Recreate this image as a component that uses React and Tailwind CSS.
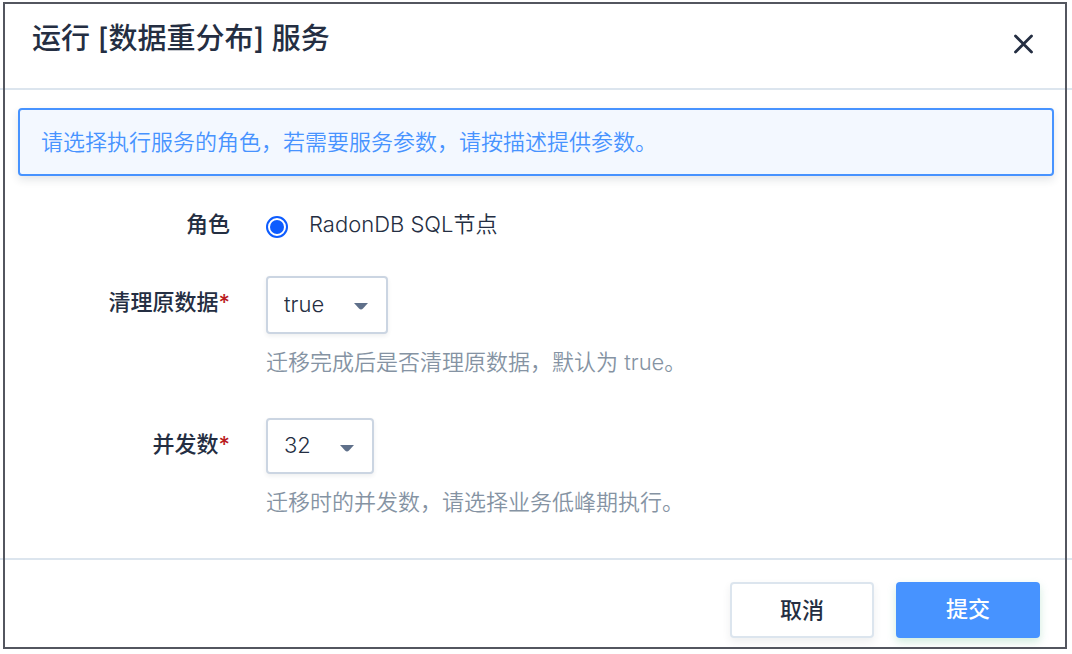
import { useState } from "react";

function RequiredMark() {
  return <span className="text-[#ba1c21]">*</span>;
}

function Select({ id, options, defaultValue, className }) {
  return (
    <div className={`relative ${className}`}>
      <select
        id={id}
        defaultValue={defaultValue}
        className="block h-full w-full appearance-none rounded-[4px] border-2 border-[#cbd5e2] bg-white pb-0.5 pl-4 text-[22px] leading-8 text-[#242e42] shadow-[0_2px_4px_rgba(36,46,66,0.08)] outline-none"
      >
        {options.map((option) => (
          <option key={option}>{option}</option>
        ))}
      </select>
      <svg
        viewBox="0 0 14 7"
        aria-hidden="true"
        className="pointer-events-none absolute top-[27px] right-5 h-[7px] w-[14px] fill-[#5f708a]"
      >
        <path d="M0 0h14L9 5.6Q7 7.4 5 5.6Z" />
      </svg>
    </div>
  );
}

function Field({ id, label, hint, children }) {
  return (
    <div className="grid grid-cols-[212px_1fr] gap-x-9">
      <label htmlFor={id} className="pt-2.5 text-right font-medium">
        {label}
        <RequiredMark />
      </label>
      <div>
        {children}
        <p className="mt-3 text-[#8593a3]">{hint}</p>
      </div>
    </div>
  );
}

export default function App() {
  const [role, setRole] = useState("sql");

  return (
    <main
      role="dialog"
      aria-labelledby="dialog-title"
      className="relative bg-white pb-[5px] font-['Inter','Noto_Sans_CJK_SC',sans-serif] text-[22px] leading-8 font-[350] text-[#242e42]"
    >
      <header className="flex h-[90px] items-start justify-between border-b-2 border-[#dce5ee] pr-[35px] pl-8">
        <h1 id="dialog-title" className="pt-[19px] text-[29px] leading-10 font-medium">
          运行 [数据重分布] 服务
        </h1>
        <button type="button" aria-label="关闭" className="mt-8 p-0.5">
          <svg
            viewBox="0 0 22 22"
            className="size-[22px] stroke-[#242e42]"
            fill="none"
            strokeWidth="2.8"
            strokeLinecap="round"
          >
            <path d="M2.5 2l16 16M18.5 2l-16 16" />
          </svg>
        </button>
      </header>

      <form onSubmit={(event) => event.preventDefault()}>
        <div className="px-[18px] pt-[18px] pb-10">
          <p className="rounded-[4px] border-2 border-[#4793ff] bg-[#f3f8ff] px-[21px] py-4 text-[#4793ff] shadow-[0_4px_8px_rgba(36,46,66,0.12)]">
            请选择执行服务的角色，若需要服务参数，请按描述提供参数。
          </p>

          <div className="mt-8 grid grid-cols-[212px_1fr] gap-x-9">
            <span id="role-label" className="text-right font-medium">
              角色
            </span>
            <div role="radiogroup" aria-labelledby="role-label">
              <label className="flex items-start gap-[21px]">
                <input
                  type="radio"
                  name="role"
                  value="sql"
                  checked={role === "sql"}
                  onChange={(event) => setRole(event.target.value)}
                  className="mt-2 grid size-[22px] appearance-none place-content-center rounded-full border-2 border-[#0d5cff] bg-white before:size-[14px] before:rounded-full checked:before:bg-[#0d5cff]"
                />
                RadonDB SQL节点
              </label>
            </div>
          </div>

          <div className="mt-9 flex flex-col gap-10">
            <Field
              id="cleanup"
              label="清理原数据"
              hint="迁移完成后是否清理原数据，默认为 true。"
            >
              <Select
                id="cleanup"
                options={["true", "false"]}
                defaultValue="true"
                className="h-[58px] w-[122px]"
              />
            </Field>
            <Field
              id="concurrency"
              label="并发数"
              hint="迁移时的并发数，请选择业务低峰期执行。"
            >
              <Select
                id="concurrency"
                options={["8", "16", "32", "64"]}
                defaultValue="32"
                className="h-14 w-[108px]"
              />
            </Field>
          </div>
        </div>

        <footer className="flex justify-end gap-[22px] border-t-2 border-[#dce5ee] pt-[22px] pr-8 pb-[11px] font-medium">
          <button
            type="button"
            className="h-14 w-36 rounded-[4px] border-2 border-[#dce5ee] bg-white shadow-[0_4px_8px_rgba(36,46,66,0.08)]"
          >
            取消
          </button>
          <button
            type="submit"
            className="h-14 w-36 rounded-[4px] bg-[#4793ff] pb-0.5 text-white shadow-[0_4px_8px_rgba(85,188,138,0.28)]"
          >
            提交
          </button>
        </footer>
      </form>

      <div
        aria-hidden="true"
        className="pointer-events-none absolute top-0.5 right-[5px] bottom-[5px] left-[3px] border-2 border-[#53565f]"
      />
    </main>
  );
}
